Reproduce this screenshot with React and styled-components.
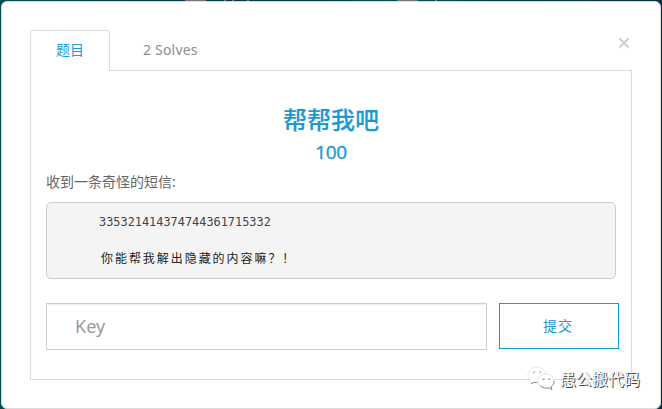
import styled, { createGlobalStyle } from 'styled-components';
import { useState } from 'react';

const GlobalStyle = createGlobalStyle`
    * {
        box-sizing: border-box;
    }
    body {
        margin: 0;
        overflow: hidden;
        background:
            linear-gradient(#7a7474, #7a7474) 185px 0 / 21px 1px no-repeat,
            linear-gradient(#7a7474, #7a7474) 224px 0 / 2px 1px no-repeat,
            linear-gradient(#7a7474, #7a7474) 232px 0 / 2px 1px no-repeat,
            linear-gradient(#7a7474, #7a7474) 247px 0 / 2px 1px no-repeat,
            linear-gradient(#7a7474, #7a7474) 397px 0 / 21px 1px no-repeat,
            linear-gradient(#7a7474, #7a7474) 435px 0 / 2px 1px no-repeat,
            linear-gradient(90deg, #044a58, #03384c 30%, #03384c 45%, #044f56 60%, #03384c 80%, #03303f);
        font-family: 'Noto Sans', 'Noto Sans CJK SC', sans-serif;
    }
`;
const Page = styled.div`
    height: 409px;
    padding: 1px 1px 0;
`;
const Modal = styled.div`
    position: relative;
    height: 408px;
    padding: 28px 28px 0;
    border: 1px solid #dcdcdc;
    border-radius: 6px;
    background-color: white;
`;
const Top = styled.div`
    display: flex;
    justify-content: space-between;
    align-items: flex-start;
    height: 41px;
    margin-bottom: -1px;
    position: relative;
`;
const Tabs = styled.div`
    display: flex;
    height: 100%;
`;
const Tab = styled.button`
    all: unset;
    box-sizing: border-box;
    height: 41px;
    padding: ${({ $wide }) => ($wide ? '0 32px 3px' : '0 25px 3px')};
    border: 1px solid ${({ $active }) => ($active ? '#dcdcdc' : 'transparent')};
    border-bottom: none;
    border-radius: 4px 4px 0 0;
    background-color: ${({ $active }) => ($active ? 'white' : 'transparent')};
    color: ${({ $active }) => ($active ? '#1b9ad2' : '#8c8c8c')};
    font-size: 14px;
    letter-spacing: ${({ $wide }) => ($wide ? '0.2px' : 'normal')};
    line-height: 37px;
    white-space: nowrap;
`;
const Close = styled.button`
    all: unset;
    display: flex;
    padding: 7px 2px;
    color: #cdcdcd;
`;
const Panel = styled.div`
    width: 602px;
    height: 310px;
    padding: 31px 12px 0 15px;
    border: 1px solid #dcdcdc;
`;
const Title = styled.h3`
    margin: 0;
    padding-right: 3px;
    color: #1b9ad2;
    font-size: 24px;
    font-weight: 500;
    line-height: 36px;
    text-align: center;
    -webkit-text-stroke: 0.15px #1b9ad2;
`;
const Score = styled.h4`
    margin: 0;
    padding-right: 3px;
    color: #1b9ad2;
    font-family: 'Open Sans', sans-serif;
    font-size: 19px;
    font-weight: 400;
    line-height: 28px;
    text-align: center;
    letter-spacing: -0.3px;
    -webkit-text-stroke: 0.4px #1b9ad2;
`;
const Desc = styled.p`
    margin: 3px 0 8px;
    color: #666;
    font-size: 14px;
    line-height: 25px;
`;
const Message = styled.pre`
    width: 570px;
    height: 77px;
    margin: 0;
    padding: 10px 52px;
    border: 1px solid #ccc;
    border-radius: 5px;
    background-color: #f4f4f4;
    color: #333;
    font-size: 12px;
    line-height: 18px;
`;
const Code = styled.div`
    color: #444;
    font-family: 'DejaVu Sans Mono', monospace;
    font-size: 11.9px;
`;
const Question = styled.div`
    margin-top: 18px;
    padding-left: 2px;
    color: #222;
    font-family: 'Noto Sans CJK SC', sans-serif;
    font-size: 12px;
    letter-spacing: 1.95px;
`;
const Form = styled.form`
    display: flex;
    align-items: flex-start;
    gap: 12px;
    margin-top: 24px;
`;
const KeyInput = styled.input`
    width: 441px;
    height: 47px;
    padding: 0 28px 2px;
    border: 1px solid #ccc;
    box-shadow: inset 0 1px 1px #eee;
    outline: none;
    font-family: 'Noto Sans', sans-serif;
    font-size: 18px;
    &::placeholder {
        color: #999;
    }
`;
const Submit = styled.button`
    width: 120px;
    height: 46px;
    padding: 0 2px 2px 0;
    border: 1px solid #1b9ad2;
    background-color: white;
    color: #1b9ad2;
    font-family: 'Noto Sans CJK SC', sans-serif;
    font-size: 14px;
    letter-spacing: 1px;
`;
// sits over the bottom right corner of the panel
const Watermark = styled.div`
    position: absolute;
    right: 20px;
    bottom: 17px;
    display: flex;
    align-items: center;
    gap: 5px;
    color: white;
    font-family: 'Noto Sans CJK SC', sans-serif;
    font-size: 16px;
    line-height: 26px;
    text-shadow: 1px 1px 0 #444, 0 0 1px #aaa;
`;

function WechatIcon() {
    return (
        <svg width="28" height="25" viewBox="0 0 28 25">
            <g fill="white" stroke="#ccc" strokeWidth="0.6">
                <path
                    d="M10 1C5 1 1 4.500 1 8.800c0 2.600 1.300 4.700 3.400 6.200L3.600 18l3.300-1.700c1 .3 2 .4 3.100.4 5 0 9-3.500 9-7.900S15 1 10 1z"
                    strokeDasharray="2 1"
                />
                <path d="M19 8c-4.600 0-8.200 3.200-8.200 7.100s3.600 7.200 8.200 7.200c1 0 2-.2 2.900-.5l3 1.700-.8-2.800c1.900-1.300 3.100-3.300 3.100-5.600C27.200 11.200 23.600 8 19 8z" />
            </g>
            <path
                d="M4 17.800l3-1.500 3 .4M13 19.500c2.400 2.500 5.800 3.200 8.900 2.300l3 1.700-.8-2.800c1.900-1.300 3.100-3.300 3.100-5.600"
                fill="none"
                stroke="#777"
                strokeWidth="0.8"
            />
            <g fill="none" stroke="#888" strokeWidth="0.9">
                <path d="M6 6.800q1.600 0 1.600-1.500M12.500 6.800q1.600 0 1.600-1.500" />
                <path d="M15.500 13.500h1.600v-1.200M21 13.500h1.600v-1.200" />
            </g>
        </svg>
    );
}

function App() {
    const [tab, setTab] = useState('challenge');
    const [key, setKey] = useState('');

    const handleSubmit = (e) => {
        e.preventDefault();
    };

    return (
        <Page>
            <GlobalStyle />
            <Modal>
                <Top>
                    <Tabs>
                        <Tab
                            $active={tab === 'challenge'}
                            onClick={() => setTab('challenge')}
                        >
                            题目
                        </Tab>
                        <Tab
                            $wide
                            $active={tab === 'solves'}
                            onClick={() => setTab('solves')}
                        >
                            2 Solves
                        </Tab>
                    </Tabs>
                    <Close aria-label="close">
                        <svg width="12" height="12" viewBox="0 0 12 12">
                            <path
                                d="M1.500 1.500l9 9M10.500 1.500l-9 9"
                                stroke="currentColor"
                                strokeWidth="1.900"
                            />
                        </svg>
                    </Close>
                </Top>
                <Panel>
                    <Title>帮帮我吧</Title>
                    <Score>100</Score>
                    <Desc>收到一条奇怪的短信:</Desc>
                    <Message>
                        <Code>335321414374744361715332</Code>
                        <Question>你能帮我解出隐藏的内容嘛？！</Question>
                    </Message>
                    <Form onSubmit={handleSubmit}>
                        <KeyInput
                            placeholder="Key"
                            value={key}
                            onChange={(e) => setKey(e.target.value)}
                        />
                        <Submit type="submit">提交</Submit>
                    </Form>
                </Panel>
                <Watermark>
                    <WechatIcon />
                    愚公搬代码
                </Watermark>
            </Modal>
        </Page>
    );
}
export default App;
